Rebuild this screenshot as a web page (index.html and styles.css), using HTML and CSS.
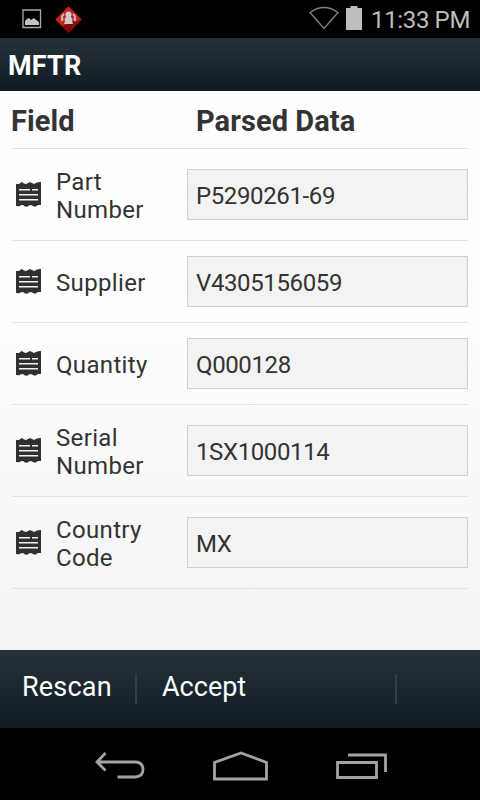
FILE: index.html
```html
<!DOCTYPE html>
<html lang="en">
<head>
<meta charset="utf-8">
<title>MFTR</title>
<link rel="stylesheet" href="styles.css">
</head>
<body>
<svg class="defs" aria-hidden="true">
  <symbol id="receipt" viewBox="0 0 25 25">
    <path fill="#303030" d="M0 2H3L4.500 .8 6 0 8 1.500 10 2 12 1 14 0 16 1 18 2 20 1 22 .3 25 0V23H22L20.500 24 19 24.700 17 24 15 23 13 23.400 11 24.700 9 24.500 7 23 5 23.300 3 24.300 0 24Z"/>
    <path fill="#f4f2f3" d="M3 7H14V8.600H3ZM16 7H22V8.600H16ZM3 12H22V13.600H3ZM3 17H22V18.600H3Z"/>
  </symbol>
</svg>
<div class="screen">
  <div class="status">
    <svg class="picture" width="20" height="20" viewBox="0 0 20 20"><path d="M1 1H18.500V18.500H1Z" fill="none" stroke="#aaa" stroke-width="1.300"/><path d="M3 16V12L5 10 7 9 9 11 12 9 14 11 16 12 17 14V16Z" fill="#c3c3c3"/></svg>
    <svg class="alert" width="27" height="27" viewBox="0 0 27 27"><path fill="#c3201f" d="M13.500 .3 26.700 13.500 13.500 26.700 .3 13.500Z"/><path fill="#850808" d="M26.700 13.500 13.500 26.700 7 20Z"/><path d="M9 8Q5.500 11 7.500 13L6.500 15M18 8Q21.500 11 19.500 13L20.500 15" fill="none" stroke="#c9b9b9" stroke-width="2"/><circle cx="13.500" cy="8.500" r="3" fill="#ccc"/><path fill="#ccc" d="M12 10H15L17.500 13 17 15 18 18H9L10 15 9.500 13Z"/></svg>
    <div class="status-right">
      <svg width="30" height="24" viewBox="0 0 30 24"><path d="M1 6.500Q15-3.500 29 6.500L15 22.500Z" fill="none" stroke="#818181" stroke-width="1.300"/></svg>
      <svg class="battery" width="16" height="24" viewBox="0 0 16 24"><path fill="#bebebe" d="M0 2H4.500V0H11.500V2H16V24H0Z"/></svg>
      <span class="time">11:33 PM</span>
    </div>
  </div>
  <header class="title"><span>MFTR</span></header>
  <main>
    <div class="head"><span class="field">Field</span><span>Parsed Data</span></div>
    <div class="row"><svg class="icon"><use href="#receipt"/></svg><label>Part<br>Number</label><div class="value"><span>P5290261-69</span></div></div>
    <div class="row short"><svg class="icon"><use href="#receipt"/></svg><label>Supplier</label><div class="value"><span>V4305156059</span></div></div>
    <div class="row short"><svg class="icon"><use href="#receipt"/></svg><label>Quantity</label><div class="value"><span>Q000128</span></div></div>
    <div class="row"><svg class="icon"><use href="#receipt"/></svg><label>Serial<br>Number</label><div class="value"><span>1SX1000114</span></div></div>
    <div class="row"><svg class="icon"><use href="#receipt"/></svg><label>Country<br>Code</label><div class="value"><span>MX</span></div></div>
  </main>
  <footer class="actions">
    <div class="action rescan"><span>Rescan</span></div>
    <div class="action accept"><span>Accept</span></div>
  </footer>
  <nav class="nav">
    <svg width="50" height="28" viewBox="0 0 50 28"><path d="M10.500 1 2 10 10.500 18.500M2 10H40.500Q48 10.500 48 17.500 48 24.500 40.500 25H22.500" fill="none" stroke="#a3a3a3" stroke-width="2.800"/></svg>
    <svg width="56" height="30" viewBox="0 0 56 30"><path d="M1.500 28V11.500L28 2 53.500 11.500V28Z" fill="none" stroke="#a3a3a3" stroke-width="2.800"/></svg>
    <svg width="51" height="26" viewBox="0 0 51 26"><path d="M1.500 9.500H40.500V24.500H1.500ZM12 2H49.500V19" fill="none" stroke="#a3a3a3" stroke-width="2.800"/></svg>
  </nav>
</div>
</body>
</html>
```
FILE: styles.css
```css
* { box-sizing: border-box; }
body { margin: 0; background: #000; font-family: Roboto, "Liberation Sans", sans-serif; color: #333; }
.defs { display: none; }
svg { display: block; flex: none; }
.screen { width: 480px; height: 800px; display: flex; flex-direction: column; overflow: hidden; }
.status { height: 38px; background: #000; display: flex; align-items: center; padding-left: 22px; padding-right: 10px; }
.alert { margin-left: 13px; }
.status-right { margin-left: auto; display: flex; align-items: center; height: 38px; }
.status-right svg { margin-bottom: 2px; }
.battery { margin-left: 7px; }
.time { color: #bebebe; font-size: 24px; line-height: 38px; padding-top: 2px; margin-left: 9px; white-space: nowrap; letter-spacing: -.36px; }
.title { height: 53px; padding-left: 8px; background: linear-gradient(#253239, #0e1b23); color: #fff; font-size: 27px; font-weight: 700; line-height: 57px; letter-spacing: .2px; }
main { height: 559px; padding: 0 12px; background: repeating-linear-gradient(150deg, rgba(0,0,0,.008) 0 2px, transparent 2px 4px), linear-gradient(#fff 0, #fff 40%, #f4f4f4 100%); }
.head { height: 58px; border-bottom: 1px solid #e1e1e1; display: grid; grid-template-columns: 184px 1fr; font-size: 29px; font-weight: 700; line-height: 60px; letter-spacing: .08px; }
.field { margin-left: -1px; }
.row { height: 92px; border-bottom: 1px solid #e1e1e1; display: grid; grid-template-columns: 44px 131px 281px; align-items: center; }
.short { height: 82px; }
.icon { width: 25px; height: 25px; margin-left: 4px; }
label { font-size: 24px; line-height: 28px; padding-top: 2px; letter-spacing: .34px; }
.value { height: 51px; border: 1px solid #cfcfcf; background: #f3f3f3; padding-left: 8px; font-size: 24px; line-height: 53px; letter-spacing: -.38px; }
.actions { height: 78px; background: linear-gradient(#253239, #0e1b23); display: flex; align-items: center; color: #fff; font-size: 27px; }
.action { height: 30px; line-height: 26px; border-right: 2px solid #333f46; }
.rescan { width: 137px; padding-left: 22px; letter-spacing: .2px; }
.accept { width: 260px; padding-left: 25px; }
.nav { height: 72px; background: #000; display: flex; align-items: center; justify-content: space-between; padding: 4px 93px 0 95px; }
```
